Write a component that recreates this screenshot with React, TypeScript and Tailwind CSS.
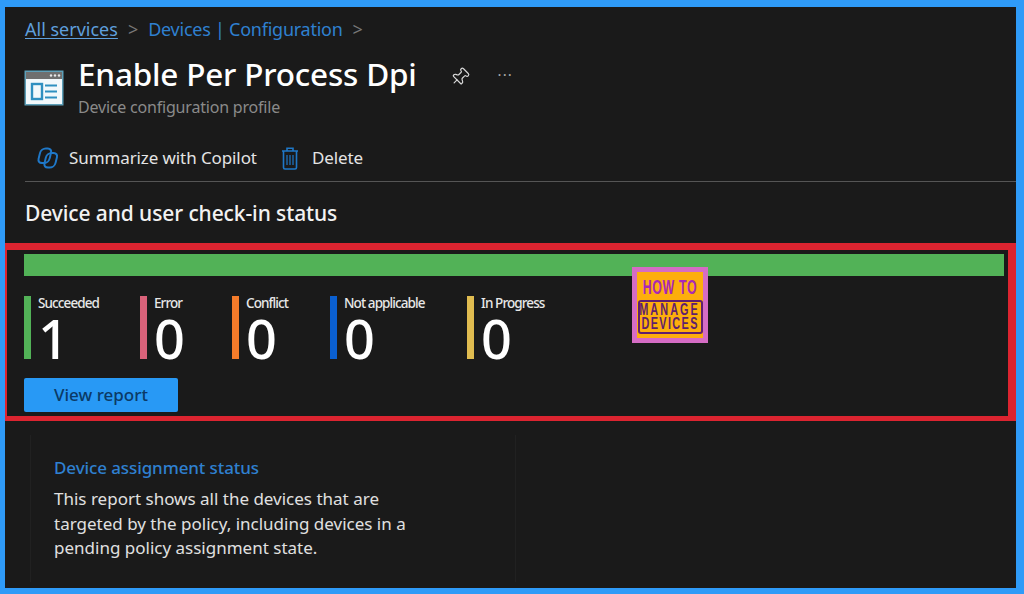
// Intune device configuration profile page, dark theme
import { Pin } from "lucide-react";

const stats = [
  { label: "Succeeded", value: "1", bar: "bg-[#52b257]", width: "w-[116px]" },
  { label: "Error", value: "0", bar: "bg-[#d9627a]", width: "w-[92px]" },
  { label: "Conflict", value: "0", bar: "bg-[#f47b2a]", width: "w-[98px]" },
  { label: "Not applicable", value: "0", bar: "bg-[#0a5fd0]", width: "w-[137px]" },
  { label: "In Progress", value: "0", bar: "bg-[#e0bc50]", width: "w-[120px]" },
];

function ProfileIcon() {
  return (
    <svg width="40" height="36" viewBox="0 0 40 36" className="shrink-0">
      <rect x="0.5" y="0.5" width="39" height="35" fill="#5d9fb8" />
      <rect x="2" y="2" width="36" height="7" fill="#6f6f6f" />
      <circle cx="27" cy="5.5" r="1.2" fill="#e8e8e8" />
      <circle cx="31" cy="5.5" r="1.2" fill="#e8e8e8" />
      <circle cx="35" cy="5.5" r="1.2" fill="#e8e8e8" />
      <rect x="2" y="9" width="36" height="25" fill="#f2f8fb" />
      <rect x="8" y="14" width="10" height="15" fill="none" stroke="#2f8fc0" strokeWidth="2.4" />
      <path d="M21 15.5h12M21 21.5h12M21 27.5h12" stroke="#2f8fc0" strokeWidth="2.2" />
    </svg>
  );
}

function CopilotIcon() {
  return (
    <svg width="24" height="22" viewBox="0 0 24 22" fill="none" stroke="#1f78c8" strokeWidth="2" className="shrink-0">
      <rect x="4" y="1.5" width="11" height="14.5" rx="4.5" transform="skewX(-14) translate(2.5 0)" />
      <rect x="10" y="6" width="11" height="14.5" rx="4.5" transform="skewX(-14) translate(3.5 0)" />
    </svg>
  );
}

function TrashIcon() {
  return (
    <svg width="18" height="23" viewBox="0 0 18 23" fill="none" stroke="#1f78c8" strokeWidth="1.6" className="shrink-0">
      <path d="M1 4h16M6 4V1.2h6V4" />
      <path d="M2.5 4v16.5q0 1.5 1.5 1.5h10q1.5 0 1.5-1.5V4" />
      <path d="M6 8v10M9 8v10M12 8v10" strokeWidth="1.2" />
    </svg>
  );
}

function Logo() {
  return (
    <div className="absolute left-[627px] top-[260px] flex h-[76px] w-[76px] flex-col items-center border-[5px] border-[#d56cc4] bg-[#fdae0c] font-['Liberation_Sans',sans-serif] font-bold">
      <div className="mt-[5px] scale-x-[0.62] text-[20px] leading-[20px] tracking-[1px] whitespace-nowrap text-[#a828b8]">HOW TO</div>
      <div className="mt-[3px] flex h-[34px] w-[65px] flex-col items-center justify-center rounded-[3px] border-2 border-[#5f1f6e] text-[#5f1f6e]">
        <div className="scale-x-[0.68] text-[16px] leading-[14px] tracking-[3px] whitespace-nowrap">MANAGE</div>
        <div className="scale-x-[0.68] text-[16px] leading-[14px] tracking-[2px] whitespace-nowrap">DEVICES</div>
      </div>
    </div>
  );
}

export default function App() {
  return (
    <div className="relative h-[594px] w-[1024px] overflow-hidden border-t-[7px] border-r-[8px] border-b-[6px] border-l-[5px] border-[#2f9bf8] bg-[#1a1a1a] font-['Noto_Sans',sans-serif] text-white">
      {/* Breadcrumb */}
      <div className="flex h-[47px] items-center gap-[10px] pb-[3px] pl-[20px] text-[18px] text-[#2f80d0]">
        <span className="text-[#5f9fdc] underline underline-offset-2">All services</span>
        <span className="text-[#777]">&gt;</span>
        <span className="tracking-[-0.25px]">Devices | Configuration</span>
        <span className="text-[#777]">&gt;</span>
      </div>

      {/* Title */}
      <div className="flex h-[63px] items-start pl-[19px]">
        <div className="mt-[16px]">
          <ProfileIcon />
        </div>
        <div className="ml-[14px]">
          <h1 className="text-[31.5px] leading-[40px] font-medium tracking-[-0.2px] whitespace-nowrap">Enable Per Process Dpi</h1>
          <p className="mt-[3px] text-[16px] leading-[20px] tracking-[-0.2px] text-[#8a8a8a]">Device configuration profile</p>
        </div>
        <Pin size={20} strokeWidth={1.4} className="mt-[13px] ml-[33px] rotate-45 text-[#d8d8d8]" />
        <span className="mt-[10px] ml-[28px] text-[15px] leading-[20px] tracking-[1px] text-[#aaa]">···</span>
      </div>

      {/* Toolbar */}
      <div className="mt-[16px] ml-[20px] flex h-[49px] items-center border-b border-[#555] pt-[2px] text-[17px] tracking-[-0.1px] text-[#e4e4e4]">
        <span className="ml-[10px]">
          <CopilotIcon />
        </span>
        <span className="ml-[10px]">Summarize with Copilot</span>
        <span className="ml-[24px]">
          <TrashIcon />
        </span>
        <span className="ml-[13px]">Delete</span>
      </div>

      <h2 className="mt-[15px] ml-[20px] text-[21px] leading-[32px] font-medium tracking-[-0.1px] text-[#f2f2f2]">Device and user check-in status</h2>

      {/* Highlighted status panel */}
      <div className="mt-[14px] h-[178px] border-t-[7px] border-r-[8px] border-b-[5px] border-l-[2px] border-[#dc2430] pt-[4px] pl-[17px]">
        <div className="h-[22px] w-[980px] bg-[#52b257]" />
        <div className="mt-[20px] flex">
          {stats.map((s) => (
            <div key={s.label} className={`flex h-[63px] ${s.width}`}>
              <div className={`h-full w-[7px] shrink-0 ${s.bar}`} />
              <div className="ml-[7px]">
                <div className="text-[13.5px] leading-[14px] font-medium tracking-[-0.9px] whitespace-nowrap text-[#e8e8e8]">{s.label}</div>
                <div className="mt-[8px] text-[54px] leading-[40px] font-medium text-white">{s.value}</div>
              </div>
            </div>
          ))}
        </div>
        <button className="mt-[19px] h-[34px] w-[154px] rounded-[2px] bg-[#2899f5] text-[17px] font-medium text-[#0b3a66]">View report</button>
      </div>

      {/* Report card */}
      <div className="mt-[14px] ml-[25px] h-[147px] w-[486px] border-r border-l border-[#212121] pt-[21px] pl-[23px]">
        <div className="text-[17px] leading-[24px] font-medium tracking-[-0.1px] text-[#2f80d0]">Device assignment status</div>
        <p className="mt-[7px] w-[360px] text-[17px] leading-[24.5px] text-[#e0e0e0]">
          This report shows all the devices that are targeted by the policy, including devices in a pending policy assignment state.
        </p>
      </div>

      <Logo />
    </div>
  );
}
